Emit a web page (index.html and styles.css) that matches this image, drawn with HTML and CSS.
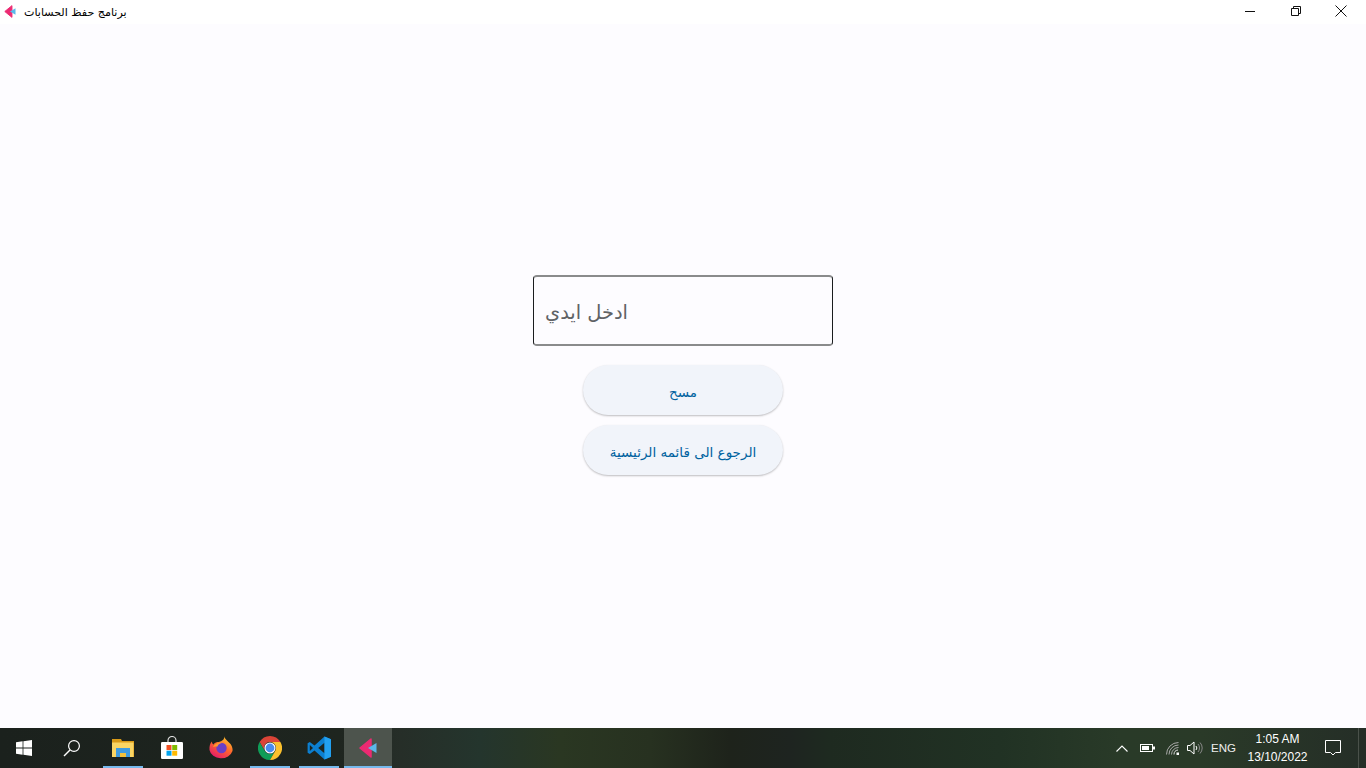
FILE: index.html
```html
<!DOCTYPE html>
<html lang="ar">
<head>
<meta charset="utf-8">
<title>برنامج حفظ الحسابات</title>
<link rel="stylesheet" href="styles.css">
</head>
<body>
<div class="window">
  <header class="titlebar">
    <div class="title-left">
      <svg class="app-icon" width="12" height="13" viewBox="0 0 18 20"><path d="M12 1L1 10L12 19Z" fill="#ec2a72" stroke="#ec2a72" stroke-width="1.5" stroke-linejoin="round"/><path d="M17.5 5V15L9 10Z" fill="#5bb8ea"/></svg>
      <span class="title-text" dir="rtl">برنامج حفظ الحسابات</span>
    </div>
    <div class="win-controls">
      <div class="win-btn"><svg width="10" height="10" viewBox="0 0 10 10"><path d="M0 5.5H10" stroke="#111" fill="none"/></svg></div>
      <div class="win-btn"><svg width="10" height="10" viewBox="0 0 10 10"><path d="M0.5 2.5H7.5V9.5H0.5ZM2.5 2.5V0.5H9.5V7.5H7.5" stroke="#111" fill="none"/></svg></div>
      <div class="win-btn"><svg width="12" height="12" viewBox="0 0 12 12"><path d="M0.5 0.5L11.5 11.5M11.5 0.5L0.5 11.5" stroke="#111" fill="none"/></svg></div>
    </div>
  </header>
  <main class="content">
    <div class="form">
      <div class="field"><span class="placeholder" dir="rtl">ادخل ايدي</span></div>
      <button class="pill" dir="rtl">مسح</button>
      <button class="pill" dir="rtl">الرجوع الى قائمه الرئيسية</button>
    </div>
  </main>
</div>
<footer class="taskbar">
  <div class="sys-btn">
    <svg width="18" height="18" viewBox="0 0 18 18" fill="#fff"><path d="M1 3.2L7.6 2.3V8.5H1ZM8.4 2.2L17 1V8.5H8.4ZM1 9.4H7.6V15.7L1 14.8ZM8.4 9.4H17V17L8.4 15.8Z"/></svg>
  </div>
  <div class="sys-btn">
    <svg width="18" height="18" viewBox="0 0 18 18" fill="none" stroke="#fff" stroke-width="1.2"><circle cx="11" cy="7" r="5.4"/><path d="M7 11L1 17" stroke-width="1.5"/></svg>
  </div>
  <div class="apps">
    <div class="app open">
      <svg width="22" height="20" viewBox="0 0 22 20"><path d="M0 1H9L10 3H22V19H0Z" fill="#d99a18"/><path d="M0 4.5H21.5V19H0Z" fill="#fad564"/><path d="M4 19V10H18V19H14V15H8V19Z" fill="#3f9be0"/><path d="M8 15H14V19H8Z" fill="#f3c13c"/></svg>
    </div>
    <div class="app">
      <svg width="24" height="24" viewBox="0 0 24 24"><path d="M8 7V4.5a4 4 0 0 1 8 0V7" fill="none" stroke="#ddd" stroke-width="1.2"/><rect x="1" y="6" width="22" height="17" rx="1.2" fill="#fff"/><rect x="6.5" y="9" width="5" height="5" fill="#f25022"/><rect x="12.2" y="9" width="5" height="5" fill="#7fba00"/><rect x="6.5" y="14.7" width="5" height="5" fill="#00a4ef"/><rect x="12.2" y="14.7" width="5" height="5" fill="#ffb900"/></svg>
    </div>
    <div class="app">
      <svg width="24" height="24" viewBox="0 0 24 24"><defs><linearGradient id="ff" x1="0.8" y1="0" x2="0.2" y2="1"><stop offset="0" stop-color="#ffd02c"/><stop offset="0.45" stop-color="#ff6a2c"/><stop offset="1" stop-color="#e3136f"/></linearGradient></defs><path d="M15 0C15.5 3 19 5 21.5 8C23.5 11 23.8 13 23.5 15A11.8 10 0 0 1 0.5 14C0.3 10 1 7.5 3 5.5C3 7.5 3.5 8 4.5 8.5C5.5 6.5 8 6 10 6C13 5 16 3.5 15 0Z" fill="url(#ff)"/><circle cx="12.5" cy="12" r="5.2" fill="#6a3fc6"/><path d="M4 11C5.5 8 9.5 6 14 6.8C11 7.2 9 8.5 8.5 10.5C7 10.5 5.5 10.5 4 11Z" fill="#ff9a2c"/></svg>
    </div>
    <div class="app open">
      <svg width="24" height="24" viewBox="0 0 24 24"><path d="M12 0A12 12 0 0 1 22.4 6H12A6 6 0 0 0 6.8 15L1.6 6A12 12 0 0 1 12 0Z" fill="#db4437"/><path d="M1.6 6A12 12 0 0 0 12 24L17.2 15A6 6 0 0 1 6.8 15Z" fill="#0f9d58"/><path d="M22.4 6A12 12 0 0 1 12 24L17.2 15A6 6 0 0 0 12 6Z" fill="#fbc02d"/><circle cx="12" cy="12" r="5.6" fill="#fff"/><circle cx="12" cy="12" r="4.4" fill="#4a8cf0"/></svg>
    </div>
    <div class="app open">
      <svg width="24" height="24" viewBox="0 0 24 24"><path d="M17.5 0.5L24 3.2V20.8L17.5 23.5L7.5 14.5L2.8 18L0.6 16.8V7.2L2.8 6L7.5 9.5ZM17.5 6.8L11.2 12L17.5 17.2Z" fill="#0c7fd0"/><path d="M17.5 0.5L24 3.2V20.8L17.5 23.5V17.2V6.8Z" fill="#22a0f0"/><path d="M2.8 9V15L6 12Z" fill="#1c211d"/></svg>
    </div>
    <div class="app active">
      <svg width="18" height="20" viewBox="0 0 18 20"><path d="M12 1L1 10L12 19Z" fill="#ec2a72" stroke="#ec2a72" stroke-width="1.5" stroke-linejoin="round"/><path d="M17.5 5V15L9 10Z" fill="#5bb8ea"/></svg>
    </div>
  </div>
  <div class="tray">
    <div class="tray-item w-chev"><svg width="12" height="7" viewBox="0 0 12 7" fill="none" stroke="#fff" stroke-width="1.1"><path d="M0.5 6.5L6 1L11.5 6.5"/></svg></div>
    <div class="tray-item w-batt"><svg width="15" height="8" viewBox="0 0 15 8"><rect x="0.5" y="0.5" width="12" height="7" fill="none" stroke="#fff"/><rect x="2" y="2" width="7" height="4" fill="#fff"/><rect x="13" y="2.5" width="2" height="3" fill="#fff"/></svg></div>
    <div class="tray-item w-wifi"><svg width="13" height="13" viewBox="0 0 13 13" fill="none" stroke="#aaa" stroke-width="1"><path d="M0.5 12.5A12 12 0 0 1 12.5 0.5M3 12.5A9.5 9.5 0 0 1 12.5 3M5.5 12.5A7 7 0 0 1 12.5 5.5"/><path d="M8 12.5A4.5 4.5 0 0 1 12 8" stroke="#ddd"/><rect x="10.5" y="10.5" width="2.5" height="2.5" fill="#fff" stroke="none"/></svg></div>
    <div class="tray-item w-vol"><svg width="17" height="14" viewBox="0 0 17 14" fill="none" stroke="#fff" stroke-width="1"><path d="M0.5 4.5H3L7 1V13L3 9.5H0.5Z"/><path d="M9 5A3 3 0 0 1 9 9"/><path d="M11 3A6 6 0 0 1 11 11M13 1.5A8 8 0 0 1 13 12.5" stroke="#888"/></svg></div>
    <div class="tray-item w-lang">ENG</div>
    <div class="tray-item w-clock"><span>1:05 AM</span><span>13/10/2022</span></div>
    <div class="tray-item w-note"><svg width="16" height="16" viewBox="0 0 16 16" fill="none" stroke="#fff" stroke-width="1"><path d="M0.5 0.5H15.5V12.5H10.5L8 15L5.5 12.5H0.5Z"/></svg></div>
    <div class="show-desktop"></div>
  </div>
</footer>
</body>
</html>
```

FILE: styles.css
```css
* { box-sizing: border-box; }
html, body { margin: 0; padding: 0; height: 100%; overflow: hidden; }
body {
  display: flex;
  flex-direction: column;
  width: 1366px;
  height: 768px;
  font-family: "DejaVu Sans", "Noto Sans", sans-serif;
  background: #fdfcff;
}
.window { flex: 1; display: flex; flex-direction: column; min-height: 0; }
.titlebar {
  height: 24px;
  background: #fff;
  display: flex;
  justify-content: space-between;
  align-items: flex-start;
}
.title-left { display: flex; align-items: center; gap: 8px; padding-left: 4px; height: 23px; }
.app-icon { flex: none; }
.title-text { font-size: 11.1px; color: #000; padding-top: 2px; }
.win-controls { display: flex; padding-right: 2px; }
.win-btn {
  width: 45.5px;
  height: 22px;
  display: flex;
  align-items: center;
  justify-content: center;
}
.content {
  flex: 1;
  display: flex;
  align-items: center;
  justify-content: center;
  background: #fdfcff;
  padding-bottom: 2px;
}
.form { display: flex; flex-direction: column; align-items: center; width: 300px; }
.field {
  width: 300px;
  height: 71px;
  border: 1px solid #1a1c1e;
  border-top: 2px solid #8a8b8c;
  border-bottom: 2px solid #8a8b8c;
  border-radius: 4px;
  padding: 4px 11px 0;
  display: flex;
  align-items: center;
  justify-content: flex-start;
  margin-bottom: 19px;
}
.placeholder { font-size: 19.4px; color: #5f6265; }
.pill {
  width: 200px;
  height: 50px;
  border: 0;
  border-radius: 25px;
  background: #f1f4fa;
  box-shadow: 0 1px 2px rgba(0,0,0,.25);
  color: #00629f;
  font-family: inherit;
  font-size: 13.5px;
  font-weight: 500;
  padding: 4px 0 0;
  margin-bottom: 10px;
}
.pill:last-child { margin-bottom: 0; }
.taskbar {
  flex: none;
  height: 40px;
  display: flex;
  color: #fff;
  background: linear-gradient(90deg, #1b211d 0, #1e251f 340px, #262e28 400px, #24352d 480px, #2a3722 560px, #273120 650px, #1e231b 730px, #1e2420 790px, #1e2a20 830px, #213224 1000px, #293a28 1120px, #2a3a28 1200px, #252e27 1366px);
}
.sys-btn { width: 48px; display: flex; align-items: center; justify-content: center; }
.apps { display: flex; gap: 1px; padding-left: 3px; }
.app {
  width: 48px;
  display: flex;
  align-items: center;
  justify-content: center;
  position: relative;
}
.app.open::after, .app.active::after {
  content: "";
  position: absolute;
  left: 4px;
  right: 4px;
  bottom: 0;
  height: 2px;
  background: #76b9ed;
}
.app.active { background: #4d544d; }
.app.active::after { left: 0; right: 0; }
.tray { margin-left: auto; display: flex; align-items: center; height: 100%; font-family: "Liberation Sans", sans-serif; font-size: 12px; }
.tray-item { display: flex; align-items: center; justify-content: center; height: 100%; }
.w-chev { width: 24px; }
.w-batt { width: 26px; }
.w-wifi { width: 24px; }
.w-vol { width: 22px; }
.w-lang { width: 30px; justify-content: flex-end; font-size: 11.5px; color: #eee; }
.w-clock { width: 83px; flex-direction: column; gap: 2px; line-height: 16px; }
.w-note { width: 28px; }
.show-desktop { width: 8px; height: 100%; margin-left: 11px; border-left: 1px solid #4a514a; }
```
